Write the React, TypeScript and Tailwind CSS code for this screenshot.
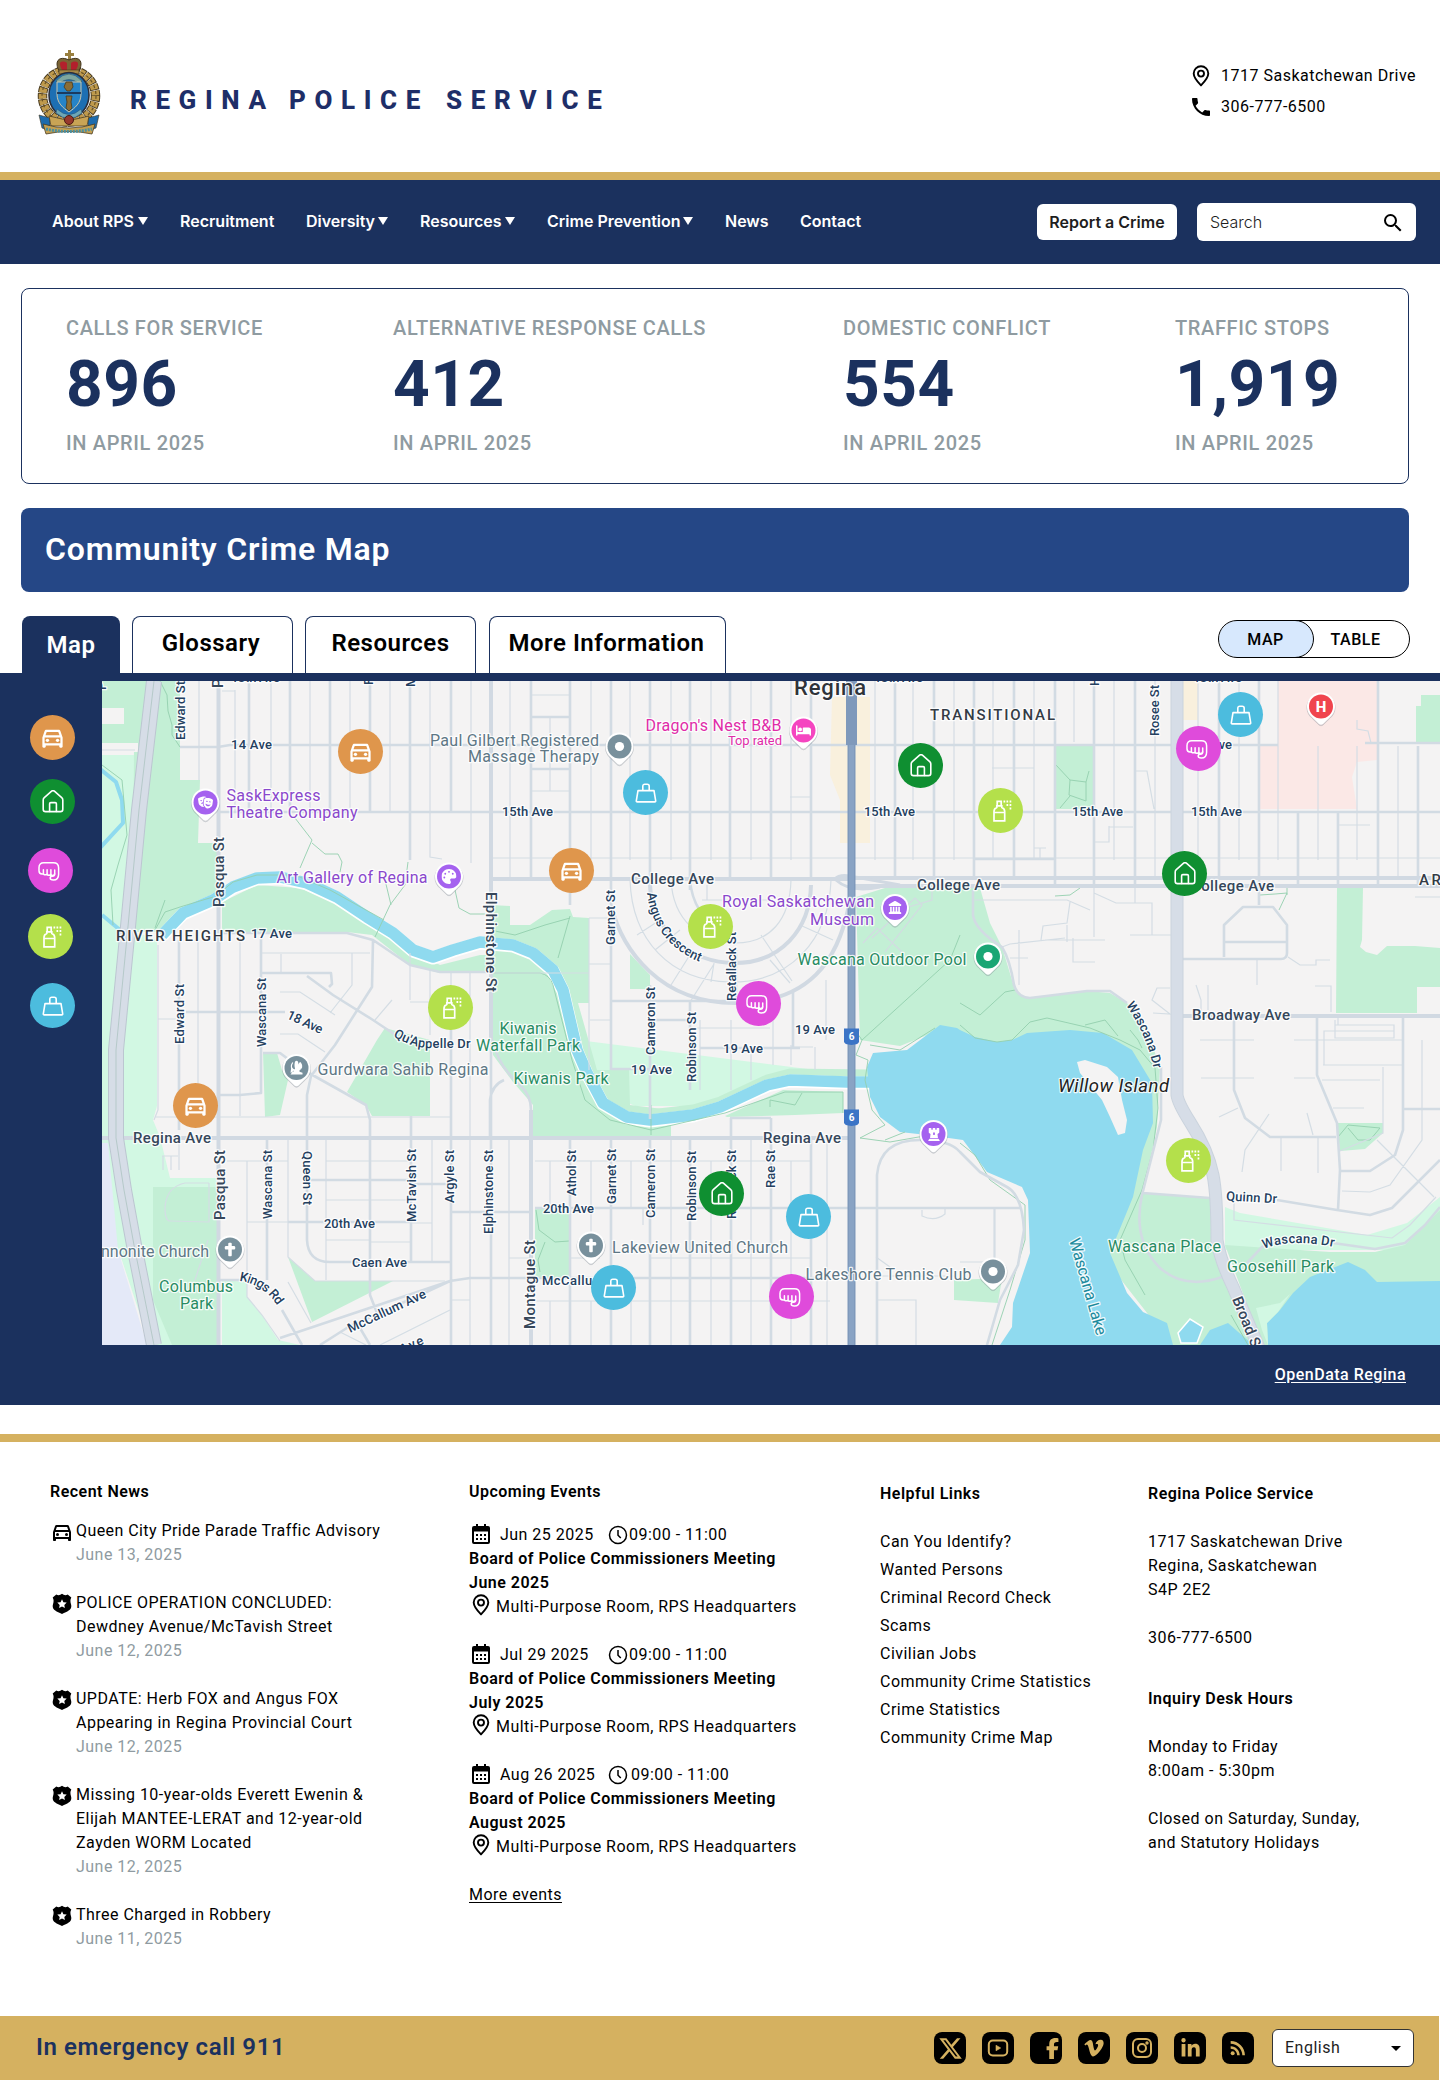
import React from "react";
import { MdOutlineDirectionsCar, MdPhone, MdSearch, MdRssFeed } from "react-icons/md";
import {
  FaXTwitter,
  FaFacebookF,
  FaVimeoV,
  FaLinkedinIn,
  FaMasksTheater,
  FaPalette,
  FaBed,
  FaChessRook,
  FaLandmark,
  FaCross,
} from "react-icons/fa6";

/* ---------- crime category icons ---------- */

type Kind = "car" | "house" | "fist" | "spray" | "bag";

function CategoryIcon({ kind }: { kind: Kind }) {
  if (kind === "car") return <MdOutlineDirectionsCar className="size-[27px]" />;
  const common = {
    width: 24,
    height: 24,
    viewBox: "0 0 24 24",
    fill: "none",
    stroke: "currentColor",
    strokeWidth: 1.6,
    strokeLinejoin: "round" as const,
    strokeLinecap: "round" as const,
  };
  if (kind === "house")
    return (
      <svg {...common}>
        <path d="M2.200 10c0-1 .3-1.700 1.100-2.400L10.600 1.200c.8-.7 2-.7 2.800 0l7.300 6.400c.8.7 1.100 1.400 1.100 2.400v9.200c0 1.500-.9 2.400-2.400 2.400H4.600c-1.500 0-2.400-.9-2.400-2.400z" />
        <path d="M8.600 21.400v-7.600c0-.8.4-1.200 1.200-1.200h4.400c.8 0 1.200.4 1.200 1.200v7.600" />
      </svg>
    );
  if (kind === "fist")
    return (
      <svg {...common} className="-ml-[3px]" strokeWidth="1.5">
        <path d="M6.400 15H5C3 15 2 13.900 2 11.800V8.500C2 5.400 3.700 3.800 6.800 3.800h9.600c3.300 0 5.200 1.800 5.200 5v6.400c0 3.700-1.900 5.800-5.200 5.800-1.900 0-3.200-.7-3.200-2 0-1.200.9-1.700 2.200-1.700 1.500 0 2.300-.8 2.300-2.300v-4" />
        <path d="M6.400 10.800v3.400c0 2.200 3.700 2.200 3.700 0v-3.400M10.100 14.400c0 2.400 3.800 2.400 3.800 0v-3.600M13.900 14.800c0 2.200 3.700 2.200 3.700 0" />
      </svg>
    );
  if (kind === "spray")
    return (
      <svg {...common} strokeLinejoin="miter" strokeLinecap="butt">
        <path
          d="M5 21.800V12.500c0-2.200 1-3.300 2.800-4V6.800h5v1.700c1.800.7 2.900 1.800 2.900 4v9.300zM5 13.500h10.700M8.200 6.400V2.400h4v4"
          strokeWidth="1.700"
        />
        <path d="M14.500 2.500h1.700M17.500 2.500h1.700M20.600 2.500h1.700M17.500 6h1.700M20.600 6h1.700M20.600 9.500h1.700" strokeWidth="1.800" />
      </svg>
    );
  return (
    <svg {...common}>
      <path d="M4 9.600h16l1.700 10.200c.1.700-.2 1.100-.9 1.100H3.200c-.7 0-1-.4-.9-1.100z" />
      <path d="M8.800 9.200V5.200c0-1.300.7-2 2-2h2.400c1.300 0 2 .7 2 2v4" />
    </svg>
  );
}

const kindBg: Record<Kind, string> = {
  car: "bg-[#df964c]",
  house: "bg-[#0f8f31]",
  fist: "bg-[#df4bdb]",
  spray: "bg-[#b4e04b]",
  bag: "bg-[#4cbcde]",
};

function Badge({ kind }: { kind: Kind }) {
  return (
    <div className={`flex size-[45px] items-center justify-center rounded-full text-white ${kindBg[kind]}`}>
      <CategoryIcon kind={kind} />
    </div>
  );
}

/* ---------- map ---------- */

const incidents: [Kind, number, number][] = [
  ["car", 360, 751],
  ["car", 571, 870],
  ["car", 195.5, 1105],
  ["house", 920.5, 765.5],
  ["house", 1184.5, 873.5],
  ["house", 721.5, 1193.5],
  ["fist", 758.5, 1003.5],
  ["fist", 1198.5, 748.5],
  ["fist", 791.5, 1296.5],
  ["spray", 450.5, 1007.5],
  ["spray", 710.5, 926.5],
  ["spray", 1000.5, 810.5],
  ["spray", 1188.5, 1160.5],
  ["bag", 645.5, 792.5],
  ["bag", 1240.5, 714.5],
  ["bag", 808.5, 1216.5],
  ["bag", 613.5, 1287.5],
];

const NAVY = "#24405f";
const SLATE = "#36475a";
const INK = "#333b45";
const PURPLE = "#8a48cc";
const GREY = "#5e7785";
const GREEN = "#278b62";

// text, x, baseline y, width, font size, colour, weight, rotation
type Label = [string, number, number, number, number, string, number, number];

const labels: Label[] = [
  ["14 Ave", 231, 749, 41, 13, NAVY, 500, 0],
  ["15th Ave", 502, 816, 51, 13, NAVY, 500, 0],
  ["15th Ave", 864, 816, 51, 13, NAVY, 500, 0],
  ["15th Ave", 1072, 816, 51, 13, NAVY, 500, 0],
  ["15th Ave", 1191, 816, 51, 13, NAVY, 500, 0],
  ["14th Ave", 1181, 749, 51, 13, NAVY, 500, 0],
  ["13th Ave", 231, 682, 49, 13, NAVY, 500, 0],
  ["13th Ave", 874, 681.5, 49, 13, NAVY, 500, 0],
  ["13th Ave", 1193, 682, 49, 13, NAVY, 500, 0],
  ["17 Ave", 251, 937.5, 41, 13, NAVY, 500, 0],
  ["18 Ave", 286, 1018, 38, 13, NAVY, 500, 25],
  ["Edward St", 184.5, 740, 59, 13, NAVY, 500, -90],
  ["Edward St", 183.5, 1044, 60, 13, NAVY, 500, -90],
  ["Wascana St", 266, 1047, 69, 13, NAVY, 500, -90],
  ["P", 106, 690, 8, 13, NAVY, 500, -90],
  ["P", 223, 688, 10, 15, SLATE, 500, -90],
  ["R", 373, 685, 8, 13, NAVY, 500, -90],
  ["M", 415, 687, 11, 13, NAVY, 500, -90],
  ["H", 1099, 686, 9, 13, NAVY, 500, -90],
  ["Pasqua St", 224, 907, 70, 15, SLATE, 500, -90],
  ["Pasqua St", 225, 1220, 70, 15, SLATE, 500, -90],
  ["Garnet St", 615, 945, 55, 13, NAVY, 500, -90],
  ["Elphinstone St", 486, 892, 100, 15, SLATE, 500, 90],
  ["Retallack St", 736, 1001, 69, 13, NAVY, 500, -90],
  ["Cameron St", 655, 1055, 68, 13, NAVY, 500, -90],
  ["Robinson St", 695.5, 1082, 70, 13, NAVY, 500, -90],
  ["19 Ave", 795, 1033.5, 40, 13, NAVY, 500, 0],
  ["19 Ave", 723, 1053, 40, 13, NAVY, 500, 0],
  ["19 Ave", 631, 1074, 41, 13, NAVY, 500, 0],
  ["Wascana St", 272, 1219, 69, 13, NAVY, 500, -90],
  ["Queen St", 303, 1151, 54, 13, NAVY, 500, 90],
  ["McTavish St", 416, 1222, 73, 13, NAVY, 500, -90],
  ["Argyle St", 454, 1203, 53, 13, NAVY, 500, -90],
  ["Elphinstone St", 493, 1234, 84, 13, NAVY, 500, -90],
  ["Athol St", 576, 1196, 46, 13, NAVY, 500, -90],
  ["Garnet St", 615.5, 1204, 55, 13, NAVY, 500, -90],
  ["Cameron St", 655, 1218, 69, 13, NAVY, 500, -90],
  ["Robinson St", 696, 1221, 70, 13, NAVY, 500, -90],
  ["Retallack St", 736, 1219, 69, 13, NAVY, 500, -90],
  ["Rae St", 775, 1188, 38, 13, NAVY, 500, -90],
  ["Montague St", 535, 1329, 89, 15, SLATE, 500, -90],
  ["20th Ave", 324, 1227.5, 51, 13, NAVY, 500, 0],
  ["20th Ave", 543, 1212.5, 51, 13, NAVY, 500, 0],
  ["Caen Ave", 352, 1267, 55, 13, NAVY, 500, 0],
  ["McCallum Ave", 350, 1333, 85, 13, NAVY, 500, -25],
  ["McCallum", 542, 1284.5, 62, 13, NAVY, 500, 0],
  ["Ave", 402, 1354, 25, 13, NAVY, 500, -25],
  ["Regina Ave", 133, 1142.5, 78, 15, SLATE, 500, 0],
  ["Regina Ave", 763, 1142.5, 78, 15, SLATE, 500, 0],
  ["College Ave", 631, 883.5, 83, 15, SLATE, 500, 0],
  ["College Ave", 917, 890, 83, 15, SLATE, 500, 0],
  ["College Ave", 1191, 890.5, 83, 15, SLATE, 500, 0],
  ["Broadway Ave", 1192, 1020, 98, 15, SLATE, 500, 0],
  ["Rosee St", 1159, 736, 51, 13, NAVY, 500, -90],
  ["TRANSITIONAL", 930, 720, 125, 15, INK, 500, 0],
  ["RIVER HEIGHTS", 116, 940.5, 129, 15, INK, 500, 0],
  ["AR", 1419, 884.5, 22, 15, INK, 500, 0],
  ["Regina", 794, 695, 72, 22, "#2f3339", 500, 0],
  ["Quinn Dr", 1226, 1200.5, 51, 13, NAVY, 500, 3],
  ["Broad St", 1232, 1299, 58, 15, SLATE, 500, 68],
  ["Wascana Lake", 1069, 1240, 100, 16, "#1c8a9c", 400, 74],
  ["SaskExpress", 226.5, 801, 94, 16, PURPLE, 400, 0],
  ["Theatre Company", 226.5, 818, 131, 16, PURPLE, 400, 0],
  ["Art Gallery of Regina", 276.5, 883, 151, 16, PURPLE, 400, 0],
  ["Paul Gilbert Registered", 430, 745.5, 169, 16, GREY, 400, 0],
  ["Massage Therapy", 468, 762, 131, 16, GREY, 400, 0],
  ["Dragon's Nest B&B", 645.5, 731, 136, 16, "#e02ca8", 400, 0],
  ["Top rated", 728, 745, 54, 13, "#e02ca8", 400, 0],
  ["Royal Saskatchewan", 722, 907, 152, 16, PURPLE, 400, 0],
  ["Museum", 810, 924.5, 64, 16, PURPLE, 400, 0],
  ["Wascana Outdoor Pool", 797.5, 965, 169, 16, GREEN, 400, 0],
  ["Kiwanis", 499.5, 1033.5, 57, 16, GREEN, 400, 0],
  ["Waterfall Park", 476, 1050.5, 104, 16, GREEN, 400, 0],
  ["Kiwanis Park", 513.5, 1083.5, 95, 16, GREEN, 400, 0],
  ["Gurdwara Sahib Regina", 317.5, 1075, 171, 16, GREY, 400, 0],
  ["nnonite Church", 101, 1257, 108, 16, GREY, 400, 0],
  ["Columbus", 159, 1292, 74, 16, GREEN, 400, 0],
  ["Park", 180, 1308.5, 33, 16, GREEN, 400, 0],
  ["Lakeview United Church", 612, 1253, 176, 16, GREY, 400, 0],
  ["Lakeshore Tennis Club", 805.5, 1280, 166, 16, GREY, 400, 0],
  ["Wascana Place", 1108, 1252, 113, 16, GREEN, 400, 0],
  ["Goosehill Park", 1227, 1272, 107, 16, GREEN, 400, 0],
];

const curvedLabels: [string, string, string, number][] = [
  ["angus", "Angus Crescent", "M647 893C651 925 669 951 705 964", 91],
  ["kings", "Kings Rd", "M239 1281Q264 1284 278 1307", 47],
  ["appelle", "Qu'Appelle Dr", "M393 1036Q412 1048 430 1048H474", 80],
  ["wasc1", "Wascana Dr", "M1126 1005Q1147 1035 1154 1070", 70],
  ["wasc2", "Wascana Dr", "M1264 1249Q1290 1238 1335 1247", 71],
];

const DARK_GREEN = "#c3efd5";
const LIGHT_GREEN = "#d2f8e3";
const WATER = "#8fdaef";
const LAND = "#f4f3f3";

const darkParks = [
  "102,681 180,681 180,780 200,780 198,843 217,843 217,897 183,907 165,932 133,932 134,743 102,743",
  "153,1187 217,1187 217,1345 172,1345 153,1300",
  "222,902 257,885 300,888 340,905 400,945 440,965 480,955 490,955 490,973 440,973 410,965 372,935 347,932 222,932",
  "490,905 510,906 510,925 530,925 552,910 570,909 573,917 589,918 589,1003 578,1003 597,1070 629,1070 630,1105 671,1110 671,1136 533,1136 533,1105 513,1082 493,1055",
  "725,1116 783,1090 843,1092 843,1113 795,1115 727,1117",
  "630,954 650,975 650,989 630,989",
  "263,1052 277,1053 282,1070 288,1080 280,1115 265,1117",
  "377,1040 385,1028 430,1040 430,1116 372,1116 366,1105 347,1092",
  "288,1257 315,1281 393,1281 312,1322",
  "535,1208 569,1208 569,1278 535,1278",
  "856,897 885,888 980,888 990,923 1002,947 1015,990 1025,998 1087,991 1110,993 1127,1003 1147,1030 1160,1067 1157,1127 1143,1193 1210,1198 1217,1247 1227,1277 1263,1345 1172,1345 1090,1240 1090,1100 1000,1060 940,1030 900,1046 860,1040",
  "1225,1245 1330,1252 1375,1252 1405,1245 1440,1210 1440,1345 1262,1345",
  "1337,1123 1383,1123 1383,1133 1365,1149 1340,1151",
  "1337,888 1363,888 1362,940 1360,947 1366,952 1377,955 1387,946 1415,946 1440,948 1440,987 1417,987 1417,1013 1336,1013",
  "1416,706 1421,706 1421,695 1440,695 1440,742 1416,742",
  "1055,746 1093,746 1093,809 1055,809",
  "954,1280 1002,1278 998,1303 954,1300",
];

const minorRoads =
  "M199 681V780M235 690V812M271 681V812M310 681V812M350 681V812M390 681V812M430 681V857L442 859M471 681V863" +
  "M510 681V879M550 718V791M591 681V860M630 681V860M671 681V860M711 681V860M751 681V860M791 681V860M831 681V697" +
  "M875 681V860M913 681V860M954 681V860M993 681V860M1034 681V860M1074 681V742M1114 681V860M1155 681V879M1198 681V860M1239 681V860M1278 681V860M1318 746V860M1357 746V860M1398 746V879" +
  "M493 858H1440M531 695H570M531 791H570M790 797H811M992 768H1034M222 691H235M1136 771H1147L1154 809M1109 827H1133M1109 826V842H1094" +
  "M158 945V1110L154 1120M198 930V1118M240 933V1116M158 1019H179M261 953H370M281 954V973M280 992H300L335 1015M352 953V985L330 1013M280 1034H298L325 1052" +
  "M155 1117H450M247 1161V1297L262 1315 280 1341M288 1138V1257L315 1281H445M326 1138V1280M227 1161H288M326 1161H411M326 1200H411M247 1222H288M411 1223H432M326 1240H370M370 1242H411M432 1138V1262M470 1138V1345M288 1282L311 1323" +
  "M509 1138V1258H530M550 1161V1208M591 1161V1240M631 1161V1208M671 1138V1345M711 1161V1345M751 1138V1345M791 1161V1345M827 1138V1345M535 1161H810M535 1301H830M650 1258H811M570 1258H600M509 1258V1345M550 1301V1345M591 1301V1345M631 1301V1345M643 1208V1225" +
  "M589 964H611M589 918H611M589 918V1070M490 973H589M590 1020H611M690 1028H770M700 1020V1090M731 1020V1090M751 1050V1080M773 1020V1065M791 1045V1065M813 1047H791M815 1047V1070M826 980V1040M650 1100V1119" +
  "M630 880C632 940 670 981 730 982S829 940 831 880M650 880M671 880C673 920 700 943 735 943S790 920 791 880M690 1002L714 964M671 985L693 950M711 982L714 963M637 935L660 920M655 950L680 930M770 960L790 983M761 935L792 981M800 925L833 940M702 900H770M707 885V900" +
  "M410 953V1000M430 970V1035M451 973V1028M410 1002H432M392 1000L375 1020M470 973V1138" +
  "M975 900H1067L1090 910M1094 888V937M1070 902L1067 923 1043 926 1041 940M1067 925V942M1045 940H1105M1073 938V962H1095M1094 893L1116 903H1152V935M1130 935H1172M1019 930V985M1010 958H1028M1135 888V903M1002 947L1010 944 1065 938" +
  "M1288 957L1300 965H1316V960H1330M1257 960V985M1196 985L1201 1000V1012M1208 985V1010M1315 986H1331V1012M1153 1013L1170 1014 1152 1000 1157 988H1170M1415 897H1440M1338 825H1370" +
  "M1200 1040H1254M1234 1018V1090M1294 1040H1402M1335 1020V1038H1394V1025H1335M1323 1065H1403M1322 1080H1380M1324 1065V1031H1394M1201 1078H1254M1294 1078H1315M1333 1108H1364M1219 1117L1238 1108M1269 1114L1245 1150 1242 1172M1281 1138V1171M1318 1138V1173M1307 1113L1313 1135M1383 1067V1133L1340 1151M1422 1040V1140L1390 1185 1370 1192 1342 1191M1377 1140L1434 1197M1234 1200V1220L1392 1238 1410 1225 1436 1197M1338 1018V1025" +
  "M1357 720V729L1368 731 1371 743H1377M877 1276H955M876 1300H916V1345M876 1257L890 1267M860 1030L846 1042M102 750H135M994 1260V1207M960 1262H995V1207M470 1300H450M366 1345L340 1332M380 1345L450 1310" +
  "M162 1156H178M163 1156V1170M171 1156V1170M179 1138V1170M1135 900V860M1034 848H1046M1040 848V860M1198 750V860" +
  "M209 1183H185Q166 1187 165 1208Q165 1221 170 1221L209 1222V1183M208 1240L195 1280M922 1210V1216Q935 1222 945 1214V1208";

const midRoads =
  "M249 681V812M290 681V812M330 681V812M370 681V812M410 681V860M451 681V812M531 681V879M570 681V905M611 681V1070M650 681V890M690 681V890M730 681V879M771 681V879M811 681V879M895 681V879M934 681V879M974 681V879M1014 681V879M1055 681V888M1094 681V888M1135 681V888M1219 681V879M1259 681V905M1298 812V884M1338 812V884M1378 681V884M1418 746V884" +
  "M180 747H218L230 745H1278M1365 743H1440M220 812H1440M531 717H570M531 769H570M974 859H1054" +
  "M179 940V1130M261 937V1093L240 1095H220M222 933H347L373 940L410 965L440 972H490M186 1012H285M261 973H331L332 984 329 987M307 976L333 995L373 1020L400 1038L451 1048M373 940L372 987L335 1045L311 1076L307 1095V1240Q308 1262 330 1262H450M263 1053H280L300 1068L366 1105L370 1120V1295L377 1313M310 1180H411M288 1222H410M411 1116V1262M267 1138V1280M410 1184H450M218 1280H240M282 1310L302 1345M320 1345L350 1326L420 1295L450 1281L470 1278H827M451 1212H530M451 1028V1345M280 1338L450 1281M360 1328L370 1345" +
  "M491 900V1345M570 1138V1345M611 1138V1345M650 1138V1345M690 1138V1345M731 1138V1345M771 1138V1345M811 1138V1345M535 1208H1020M611 1001H740M611 1069H670M650 1020H690M700 1048H800M690 880C692 905 705 920 715 925M650 985V1119M690 1002V1090M736 950V1001M730 1118H771M731 1118V1138M771 1118V1138M793 990V1048" +
  "M1224 957V925L1243 907H1273L1287 925V953Q1287 959 1281 959H1183M1224 942H1287M1234 1018V1090L1245 1118L1270 1137H1336M1317 1018V1075L1337 1123L1340 1170L1338 1210M1403 1016V1130L1395 1155L1370 1171H1341M1403 1109H1440M1277 1200L1337 1210L1370 1215L1392 1208L1440 1160M1333 1243L1375 1249L1405 1243L1425 1225L1440 1207M1247 1263L1262 1247L1280 1240" +
  "M973 890V915Q975 930 1002 947Q1010 960 1014 985Q1018 998 1030 998L1087 991H1110L1127 1003M877 1345V1175Q880 1140 920 1140Q950 1140 960 1152L980 1172L1007 1187Q1022 1195 1024 1230L1018 1265L1000 1300L987 1345M1161 1067V1120L1142 1195Q1132 1240 1160 1268Q1185 1290 1222 1277M1143 1193L1210 1198M493 1040Q497 1065 520 1085Q531 1095 531 1110V1345M490 1140V1100Q492 1085 504 1080";

const majorRoads =
  "M218.500 681V1345M491 681V1040M531 1110V1345M492 879H855M855 878H1440M855 886H1440M102 1138H848M1183 1016H1440M611 905C622 950 660 1003 735 1003S838 960 849 905M650 885C652 930 690 963 735 963S810 930 811 885";

const footpaths =
  "M160 681L167 695L168 711L172 725V735L180 747M102 765L122 780L127 835L118 865L111 890L113 925M165 900L155 928M213 897L180 907L165 912L155 930M217 895L233 882L257 875H295L330 890L384 920M295 818L312 840L300 868M312 843L325 854H338L342 862L340 872M408 862L405 885L390 905L375 937M385 880L391 905M455 890L459 908L470 914H490" +
  "M490 930L515 935L545 925L570 918M490 973H540Q550 975 553 985L572 1060L585 1100L610 1120L651 1130L725 1113L785 1092H843V1113M570 916L558 958M651 1105V1135M770 1107V1100L795 1105L802 1093M855 1030L862 1040L856 1055L868 1060L865 1080L872 1110L885 1125L860 1138L890 1142L930 1135M862 1040L950 960L960 935M870 1045L900 1050L935 1028" +
  "M960 1003L980 1015L1005 992L1015 990M960 1025L975 1038L997 1042L1012 1040L1030 1022L1047 1018L1090 1028L1120 1040L1140 1050M1085 1025L1105 1020L1118 1036M1142 1048L1138 1040L1130 1030M1140 1050L1155 1068L1158 1108L1153 1150L1142 1190L1120 1240L1125 1260L1145 1295M1056 765L1070 780L1086 782L1089 771M1070 780L1069 795L1086 801V782M1060 808L1070 796M1260 895L1275 894L1287 893L1279 910M1287 888V895M1055 896L1070 895L1080 888M960 1143L975 1155L990 1180L1025 1205V1240L1010 1290L992 1345M1338 1137L1348 1125L1380 1128L1370 1140H1358L1348 1128M536 1210L539 1230L555 1242L569 1241M545 1242L538 1260L540 1272M1231 1315L1248 1345M885 1140L905 1132";

const RIVER =
  "M162 935L183 913L213 900L233 887L257 878L280 877L307 883L337 897L367 917L393 933L413 950L433 957L453 950L480 942L513 945L533 953L553 970L563 990L570 1020L577 1050L587 1073L603 1103L627 1117L650 1120L693 1115L720 1107L767 1085L790 1080L847 1082L875 1082";
const RAIL = "M154 681L139 810L127 937L116 1050V1138L124 1190L134 1245L154 1345";
const BROAD = "M1177 681V1095Q1178 1103 1190 1122Q1208 1150 1213 1175Q1217 1195 1217 1240Q1220 1260 1233 1287L1260 1350";

function PoiPin({ x, y, fill, children }: { x: number; y: number; fill: string; children?: React.ReactNode }) {
  return (
    <g transform={`translate(${x} ${y})`}>
      <path
        d="M-2 17.500L-9 10.700A14 14 0 1 1 9 10.700L2 17.500Q0 19 -2 17.500Z"
        fill="#7d8791"
        stroke="#7d8791"
        opacity="0.35"
        transform="translate(0 1)"
      />
      <path d="M-2 17.500L-9 10.700A14 14 0 1 1 9 10.700L2 17.500Q0 19 -2 17.500Z" fill="#fff" />
      <circle r="12" fill={fill} />
      {children ?? <circle r="4.600" fill="#fff" />}
    </g>
  );
}

const glyph = { x: -7.5, y: -7.5, size: 15, color: "#fff" };

function CityMap() {
  return (
    <svg className="block h-full w-full font-[Roboto]" viewBox="102 681 1338 664">
      <rect x="102" y="681" width="1338" height="664" fill={LAND} />
      <g fill={LIGHT_GREEN}>
        <polygon points="102,755 138,755 135,932 157,940 157,1106 153,1120 160,1137 170,1178 217,1178 217,1345 150,1345 102,1200" />
        <polygon points="222,1280 247,1282 247,1297 262,1315 278,1340 300,1345 222,1345" />
        <polygon points="1225,1207 1240,1213 1367,1235 1407,1223 1440,1197 1440,1250 1225,1250" />
        <path d="M578 1040L600 1090L635 1106H700L760 1078L800 1070H855V1075" />
      </g>
      <g fill={DARK_GREEN}>
        {darkParks.map((p) => (
          <polygon key={p} points={p} />
        ))}
      </g>
      <rect x="102" y="708" width="22" height="16" fill={LAND} />
      <rect x="102" y="743" width="36" height="9" fill={LAND} />
      <polygon points="102,1143 108,1143 118,1250 147,1345 102,1345" fill="#e4e9f8" />
      <polygon points="1278,681 1377,681 1377,760 1357,762 1352,777 1357,809 1259,809 1259,746 1278,746" fill="#fbe8e6" />
      <polygon points="832,697 870,697 870,843 840,843 840,800 830,775" fill="#f9f0dd" />
      <rect x="1183" y="681" width="15" height="39" fill="#f9f0dd" />

      {/* creek and lake */}
      <polyline
        points="597,1075 607,1096 627,1110 650,1113 693,1108 720,1100 767,1078 790,1072 870,1073"
        fill="none"
        stroke={DARK_GREEN}
        strokeWidth="7"
      />
      <g fill="none" strokeLinejoin="round">
        <path d={RIVER} stroke="#fff" strokeWidth="13" transform="translate(0 1)" />
        <path d={RIVER} stroke={WATER} strokeWidth="11.500" />
        <path d="M100 769L116 782L122 800L123 823L100 848" stroke={WATER} strokeWidth="4" />
        <path d="M102 915L120 930" stroke={WATER} strokeWidth="4" />
      </g>
      <polygon
        fill={WATER}
        points="960,1030 975,1037 997,1042 1012,1040 1027,1033 1070,1030 1103,1033 1132,1050 1152,1083 1153,1123 1143,1150 1133,1197 1110,1253 1127,1293 1143,1312 1167,1323 1173,1345 1000,1345 1012,1327 1013,1303 1030,1253 1028,1200 1022,1187 987,1172 963,1140 927,1135 900,1132 880,1117 870,1097 867,1067 873,1053 907,1050 940,1025 957,1028"
      />
      <polygon fill={LAND} points="1077,1062 1085,1060 1107,1067 1118,1077 1122,1100 1127,1120 1125,1133 1118,1135 1110,1117 1102,1100 1080,1073" />
      <polygon fill={WATER} points="1440,1281 1377,1282 1365,1270 1348,1262 1310,1277 1293,1293 1280,1310 1267,1323 1268,1345 1440,1345" />
      <polygon fill={LIGHT_GREEN} points="1256,1308 1280,1303 1290,1294 1278,1312 1267,1323 1268,1345 1262,1330" />
      <polygon fill={WATER} points="1200,1345 1210,1330 1228,1323 1253,1345" />
      <polygon fill={WATER} stroke="#fff" strokeWidth="1.500" points="1178,1333 1190,1319 1203,1327 1197,1343 1181,1343" />

      <path d={footpaths} fill="none" stroke="#93cfae" strokeWidth="0.900" />
      <path d={minorRoads} fill="none" stroke="#d4dde4" strokeWidth="1.200" />
      <path d={midRoads} fill="none" stroke="#d2dbe3" strokeWidth="2.600" strokeLinejoin="round" />
      <path d={majorRoads} fill="none" stroke="#d1d9e2" strokeWidth="4" />
      <path d="M835 879Q840 873 855 877L900 885M836 880Q850 893 880 887" fill="none" stroke="#d1d9e2" strokeWidth="3" />
      <path
        d="M863 943L877 928L902 952M872 938L915 898L922 905L885 952M905 908L932 900V888"
        fill="none"
        stroke="#d3dbe2"
        strokeWidth="1.200"
      />

      {/* railway */}
      <g fill="none">
        <path d={RAIL} stroke="#bcc6d1" strokeWidth="16" />
        <path d={RAIL} stroke="#d6dde7" strokeWidth="14" />
        <path d={RAIL} stroke="#b5c9c9" strokeWidth="1" />
      </g>

      {/* Broad Street */}
      <path d={BROAD} fill="none" stroke="#cad3dd" strokeWidth="13" />
      <path d={BROAD} fill="none" stroke="#d6dde7" strokeWidth="11" />

      {/* Highway 6 */}
      <path d="M851.500 681V1345" stroke="#7f99bb" strokeWidth="8" />
      <path d="M851.500 681V745" stroke="#7f99bb" strokeWidth="11" />
      <path d="M851.500 745V1345" stroke="#89a3c4" strokeWidth="5" />
      {[1036.5, 1117.5].map((y) => (
        <g key={y}>
          <path d={`M844 ${y - 8}H859V${y + 5}Q859 ${y + 8} 851.500 ${y + 8.5}Q844 ${y + 8} 844 ${y + 5}Z`} fill="#3b74c6" />
          <text x="851.500" y={y + 3.8} textAnchor="middle" fontSize="10" fontWeight="700" fill="#fff">
            6
          </text>
        </g>
      ))}

      <g stroke="#fff" strokeWidth="2.600" strokeLinejoin="round" strokeOpacity="0.85" style={{ paintOrder: "stroke" }}>
        {labels.map(([t, x, y, w, size, fill, weight, rot], i) => (
          <text
            key={i}
            transform={`translate(${x} ${y}) rotate(${rot})`}
            textLength={w}
            fontSize={size}
            fontWeight={weight}
            fill={fill}
          >
            {t}
          </text>
        ))}
        <text x="1058" y="1092" textLength="111" fontSize="18.500" fontStyle="italic" fill="#222">
          Willow Island
        </text>
        {curvedLabels.map(([id, t, d, w]) => (
          <React.Fragment key={id}>
            <path id={id} d={d} fill="none" stroke="none" />
            <text fontSize="13" fontWeight="500" fill={NAVY} textLength={w}>
              <textPath href={`#${id}`}>{t}</textPath>
            </text>
          </React.Fragment>
        ))}
      </g>

      <PoiPin x={205.5} y={802.5} fill="#a562ef">
        <FaMasksTheater {...glyph} />
      </PoiPin>
      <PoiPin x={449} y={876.5} fill="#a562ef">
        <FaPalette {...glyph} />
      </PoiPin>
      <PoiPin x={619.5} y={746.5} fill="#78909c" />
      <PoiPin x={803.5} y={730.5} fill="#f545c0">
        <FaBed {...glyph} />
      </PoiPin>
      <PoiPin x={895} y={908} fill="#a562ef">
        <FaLandmark x={-6.5} y={-7} size={13} color="#fff" />
      </PoiPin>
      <PoiPin x={988} y={956.5} fill="#1aa674" />
      <PoiPin x={296.5} y={1068} fill="#78909c">
        <path d="M-6 6.500h12v-1.700l-3-1V1.500q2-1 2-4 0-2-1.500-3.500M-5-2.500q0 3 2 4v2.300l-3 1z" fill="#fff" />
        <path d="M-3.800-5.500q-3.500 5.500 1.800 7.500M3.800-5.500q3.500 5.500-1.800 7.500" fill="none" stroke="#fff" strokeWidth="1.200" />
        <ellipse cy="-3" rx="2" ry="4.300" fill="#fff" />
        <path d="M-1.500 0h3v5h-3z" fill="#fff" />
      </PoiPin>
      <PoiPin x={230} y={1249.5} fill="#78909c">
        <FaCross x={-7} y={-7} size={14} color="#fff" />
      </PoiPin>
      <PoiPin x={591} y={1245.5} fill="#78909c">
        <FaCross x={-7} y={-7} size={14} color="#fff" />
      </PoiPin>
      <PoiPin x={993} y={1271.5} fill="#78909c" />
      <PoiPin x={933.5} y={1134} fill="#a562ef">
        <FaChessRook x={-6.5} y={-7} size={14} color="#fff" />
      </PoiPin>
      <PoiPin x={1321} y={706.5} fill="#f0444e">
        <text textAnchor="middle" y="5.500" fontSize="15" fontWeight="800" fill="#fff">
          H
        </text>
      </PoiPin>
    </svg>
  );
}

/* ---------- header ---------- */

function Crest() {
  return (
    <svg width="64" height="85" viewBox="0 0 64 85">
      {/* laurel wreath */}
      <ellipse cx="32" cy="46" rx="26.500" ry="26" fill="none" stroke="#4b3d22" strokeWidth="9.500" strokeDasharray="5.500 .6" />
      <ellipse cx="32" cy="46" rx="26.500" ry="26" fill="none" stroke="#bf9a4c" strokeWidth="7.500" strokeDasharray="4.600 1.500" />
      <ellipse cx="32" cy="46" rx="27" ry="26.500" fill="none" stroke="#6b5427" strokeWidth="1.200" strokeDasharray="3 3" />
      {/* crown */}
      <path d="M31 0h3v3h3v3h-3v4h-3V6h-3V3h3z" fill="#9a803f" />
      <path d="M20 14c0-6 6-7 12-4 6-3 12-2 12 4 0 4-2 6-3 9H23c-1-3-3-5-3-9z" fill="#7a6334" stroke="#42351d" />
      <path d="M23 14c0-3 4-3 7-1v7h-5c-1-2-2-4-2-6zM41 14c0-3-4-3-7-1v7h5c1-2 2-4 2-6z" fill="#b3202c" />
      <path d="M22 20h20v4H22z" fill="#a58745" stroke="#42351d" strokeWidth=".6" />
      {/* shield */}
      <ellipse cx="32" cy="45" rx="20" ry="22.500" fill="#1d6fb3" stroke="#2c2f3a" strokeWidth="1.600" />
      <path d="M19 31q13-14 26 0l-3 2.500q-10-8-20 0z" fill="#7ea79f" stroke="#3c5b63" strokeWidth=".6" />
      <path d="M20 32h24v12c0 9-6 14-12 18-6-4-12-9-12-18z" fill="#2684c8" stroke="#cfc6a8" strokeWidth="1" />
      <path d="M20 43h24" stroke="#182947" strokeWidth="1.600" />
      <path d="M29 32h6l1 5-3 4h-3l-3-4zM29 46h6l-1 6 1 6-3 3-3-3 1-6z" fill="#8a6d35" stroke="#49391c" strokeWidth=".8" />
      <path d="M20 59q12 11 24 0l1 4q-13 11-26 0z" fill="#6fa7b5" stroke="#2a5b7b" strokeWidth=".6" />
      {/* ribbon */}
      <path d="M2 65l11 3v13l-8-3zM62 65l-11 3v13l8-3z" fill="#1d6cae" stroke="#42351d" strokeWidth=".6" />
      <path d="M12 66l13 3 7 1 7-1 13-3-2 10H14z" fill="#c9a455" stroke="#4b3d22" strokeWidth=".8" />
      <path d="M6 74q26 8 52 0l-3 10q-23-5-46 0z" fill="#c3a052" stroke="#4b3d22" strokeWidth=".8" />
      <path d="M9 79q23 5 46 0" fill="none" stroke="#4a8fa0" strokeWidth="3" strokeDasharray="2 1" />
      <circle cx="32" cy="70" r="4.500" fill="#97382c" stroke="#4b1a15" />
    </svg>
  );
}

function PinIcon({ className }: { className?: string }) {
  return (
    <svg className={className} width="18" height="22" viewBox="0 0 18 22" fill="none" stroke="currentColor" strokeWidth="1.900">
      <path d="M9 20.400C5.400 16.800 1.700 12.600 1.700 8.600a7.300 7.300 0 0 1 14.600 0c0 4-3.700 8.200-7.300 11.800z" strokeLinejoin="round" />
      <circle cx="9" cy="8.600" r="3" />
    </svg>
  );
}

function Caret() {
  return (
    <svg width="10" height="8" viewBox="0 0 10 8" className="shrink-0">
      <path d="M0 0h10L5 8z" fill="#fff" />
    </svg>
  );
}

function NavItem({ label, caret, className }: { label: string; caret?: boolean; className: string }) {
  return (
    <a className={`flex shrink-0 items-center ${className}`}>
      <span>{label}</span>
      {caret && <Caret />}
    </a>
  );
}

function Stat({ label, value, className }: { label: string; value: string; className: string }) {
  return (
    <div className={`shrink-0 whitespace-nowrap ${className}`}>
      <div className="text-xl leading-6 font-medium tracking-[0.640px] text-[#8f9ba1]">{label}</div>
      <div className="mt-[7px] text-[64px] leading-[75px] font-bold tracking-[0.500px] text-[#1b315e]">{value}</div>
      <div className="mt-[9px] text-xl leading-6 font-medium tracking-[0.640px] text-[#8f9ba1]">IN APRIL 2025</div>
    </div>
  );
}

/* ---------- footer ---------- */

const news: { car?: boolean; lines: string[]; date: string }[] = [
  { car: true, lines: ["Queen City Pride Parade Traffic Advisory"], date: "June 13, 2025" },
  { lines: ["POLICE OPERATION CONCLUDED:", "Dewdney Avenue/McTavish Street"], date: "June 12, 2025" },
  { lines: ["UPDATE: Herb FOX and Angus FOX", "Appearing in Regina Provincial Court"], date: "June 12, 2025" },
  {
    lines: ["Missing 10-year-olds Everett Ewenin &", "Elijah MANTEE-LERAT and 12-year-old", "Zayden WORM Located"],
    date: "June 12, 2025",
  },
  { lines: ["Three Charged in Robbery"], date: "June 11, 2025" },
];

const events = [
  ["Jun 25 2025", "June 2025"],
  ["Jul 29 2025", "July 2025"],
  ["Aug 26 2025", "August 2025"],
];

const links = [
  "Can You Identify?",
  "Wanted Persons",
  "Criminal Record Check",
  "Scams",
  "Civilian Jobs",
  "Community Crime Statistics",
  "Crime Statistics",
  "Community Crime Map",
];

function PoliceBadgeIcon() {
  return (
    <svg width="20" height="22" viewBox="0 0 20 22" className="mt-0.5 ml-0.5">
      <path
        d="M4.300 1.600C6.300 2.600 8.300 2.200 10 .8c1.700 1.400 3.700 1.800 5.700.8l3.600 3c-1.300 2.200-1 4.200-.3 6.700 1.500 5.300-2.700 6.700-9 9.700-6.300-3-10.500-4.400-9-9.700.7-2.500 1-4.500-.3-6.700z"
        fill="#000"
      />
      <path d="M10 6.200l1.400 3 3.300.4-2.400 2.300.6 3.200-2.900-1.600-2.900 1.600.6-3.200-2.400-2.300 3.300-.4z" fill="#fff" />
    </svg>
  );
}

function CalendarIcon() {
  return (
    <svg width="20" height="22" viewBox="0 0 20 22" className="shrink-0">
      <path d="M5 0h2v2h6V0h2v2h2q2 0 2 2v14q0 2-2 2H3q-2 0-2-2V4q0-2 2-2h2z" fill="#000" />
      <path d="M3 7.500h14V18H3z" fill="#fff" />
      <path d="M5 10h2v2H5zM9 10h2v2H9zM13 10h2v2h-2zM5 14h2v2H5zM9 14h2v2H9zM13 14h2v2h-2z" fill="#000" />
    </svg>
  );
}

function ClockIcon() {
  return (
    <svg width="20" height="20" viewBox="0 0 20 20" fill="none" stroke="#000" strokeWidth="1.500" className="shrink-0">
      <circle cx="10" cy="10" r="8.500" />
      <path d="M10 5v5.200l2.800 2.800" />
    </svg>
  );
}

function SocialTile({ children, className = "items-center justify-center" }: { children: React.ReactNode; className?: string }) {
  return <a className={`flex size-8 overflow-hidden rounded-lg bg-black text-[#d5b160] ${className}`}>{children}</a>;
}

export default function App() {
  return (
    <div className="h-[2080px] w-[1440px] overflow-hidden bg-white font-[Roboto,sans-serif] text-black">
      <header>
        <div className="flex h-[172px] justify-between">
          <div className="flex pt-[50px] pl-[37px]">
            <Crest />
            <div className="mt-[35px] ml-[29px] flex gap-[21px] text-[26px] leading-[31px] font-extrabold text-[#1e2e68]">
              <span className="w-[138px] tracking-[8.600px]">REGINA</span>
              <span className="w-[136px] tracking-[8.600px]">POLICE</span>
              <span className="tracking-[8.700px]">SERVICE</span>
            </div>
          </div>
          <div className="w-[249px] pt-[60px] tracking-[0.500px]">
            <div className="flex h-[31px] items-center">
              <PinIcon className="ml-px" />
              <span className="ml-[11px]">1717 Saskatchewan Drive</span>
            </div>
            <div className="flex h-[31px] items-center">
              <MdPhone className="-ml-0.5 size-6" />
              <span className="ml-2">306-777-6500</span>
            </div>
          </div>
        </div>
        <div className="h-2 bg-[#d5b160]" />
        <nav className="flex h-[84px] items-center bg-[#1b315e] font-[Inter,sans-serif] text-white">
          <div className="-mt-0.5 flex pl-[52px] text-base font-semibold whitespace-nowrap">
            <NavItem className="w-[128px] gap-1" label="About RPS" caret />
            <NavItem className="w-[126px]" label="Recruitment" />
            <NavItem className="w-[114px] gap-[3px]" label="Diversity" caret />
            <NavItem className="w-[127px] gap-[3px]" label="Resources" caret />
            <NavItem className="w-[178px] gap-0.5" label="Crime Prevention" caret />
            <NavItem className="w-[75px]" label="News" />
            <NavItem className="w-[237px]" label="Contact" />
          </div>
          <button className="h-9 w-[140px] shrink-0 rounded-md bg-white text-base font-semibold whitespace-nowrap text-[#1e1e1e]">
            Report a Crime
          </button>
          <div className="ml-5 flex h-[38px] w-[219px] shrink-0 items-center justify-between rounded-md bg-white pr-[11px] pl-[13px] text-base font-light text-[#1e1e1e]">
            Search
            <MdSearch className="mt-px size-6 text-black" />
          </div>
        </nav>
      </header>

      <main>
        <section className="mx-[21px] mt-6 flex h-[196px] w-[1388px] rounded-lg border border-[#1b315e] pt-[27px] pl-[44px]">
          <Stat className="w-[327px]" label="CALLS FOR SERVICE" value="896" />
          <Stat className="w-[450px]" label="ALTERNATIVE RESPONSE CALLS" value="412" />
          <Stat className="w-[332px]" label="DOMESTIC CONFLICT" value="554" />
          <Stat className="" label="TRAFFIC STOPS" value="1,919" />
        </section>

        <h1 className="mx-[21px] mt-6 flex h-[84px] w-[1388px] items-center rounded-lg bg-[#254786] pb-0.5 pl-6 text-[32px] font-semibold tracking-[0.800px] text-white">
          Community Crime Map
        </h1>

        <div className="mt-6 flex h-[57px] pr-[30px] pl-[22px] text-2xl font-semibold tracking-[0.500px] whitespace-nowrap">
          <div className="flex w-[98px] items-center justify-center rounded-t-lg bg-[#1b315e] text-white">Map</div>
          <div className="ml-3 flex w-[161px] justify-center rounded-t-lg border border-b-0 border-[#1b315e] pt-[10px] pr-[3px]">Glossary</div>
          <div className="ml-3 flex w-[171px] justify-center rounded-t-lg border border-b-0 border-[#1b315e] pt-[10px]">Resources</div>
          <div className="ml-[13px] flex w-[237px] justify-center rounded-t-lg border border-b-0 border-[#1b315e] pt-[10px] pr-0.5">
            More Information
          </div>
          <div className="mt-1 ml-auto flex h-[38px] w-[192px] overflow-hidden rounded-full border border-black text-base font-medium">
            <div className="-m-px flex w-[96px] items-center justify-center rounded-full border border-black bg-[#d7e8fd] pt-0.5 pr-px">MAP</div>
            <div className="flex flex-1 items-center justify-center pt-0.5 pr-[11px]">TABLE</div>
          </div>
        </div>

        <section className="h-[732px] bg-[#1b315e] pt-2">
          <div className="flex h-[664px]">
            <aside className="flex w-[102px] shrink-0 flex-col pt-[34px] pl-[30px]">
              <Badge kind="car" />
              <div className="mt-[19px]">
                <Badge kind="house" />
              </div>
              <div className="mt-6 -ml-0.5">
                <Badge kind="fist" />
              </div>
              <div className="mt-[21px] -ml-0.5">
                <Badge kind="spray" />
              </div>
              <div className="mt-6">
                <Badge kind="bag" />
              </div>
            </aside>
            <div className="relative w-[1338px] overflow-hidden">
              <CityMap />
              {incidents.map(([kind, x, y]) => (
                <div key={`${x}-${y}`} className="absolute" style={{ left: x - 124.5, top: y - 703.5 }}>
                  <Badge kind={kind} />
                </div>
              ))}
            </div>
          </div>
          <div className="flex h-[60px] items-center justify-end pr-[34px]">
            <a className="text-base font-medium tracking-[0.500px] text-white underline underline-offset-2">OpenData Regina</a>
          </div>
        </section>
      </main>

      <footer>
        <div className="mt-[29px] h-2 bg-[#d5b160]" />
        <div className="flex h-[574px] pt-[38px] pl-[50px] text-base leading-6 tracking-[0.480px] whitespace-nowrap">
          <section className="w-[419px]">
            <h2 className="font-semibold">Recent News</h2>
            <div className="mt-[15px] flex flex-col gap-6">
              {news.map((n) => (
                <div key={n.lines[0]} className="flex">
                  <div className="w-[26px] shrink-0">
                    {n.car ? <MdOutlineDirectionsCar className="mt-px size-6" /> : <PoliceBadgeIcon />}
                  </div>
                  <div>
                    {n.lines.map((l) => (
                      <div key={l} className={n.car ? "tracking-[0.430px]" : ""}>
                        {l}
                      </div>
                    ))}
                    <div className="text-[#8f9ba1]">{n.date}</div>
                  </div>
                </div>
              ))}
            </div>
          </section>

          <section className="w-[411px]">
            <h2 className="font-semibold">Upcoming Events</h2>
            <div className="mt-[19px] flex flex-col gap-6">
              {events.map(([date, month]) => (
                <div key={date}>
                  <div className="flex h-6 items-center">
                    <div className="w-[31px] pl-0.5">
                      <CalendarIcon />
                    </div>
                    <span className="w-[108px]">{date}</span>
                    <ClockIcon />
                    <span className={date.startsWith("Aug") ? "ml-[3px]" : "ml-px"}>09:00 - 11:00</span>
                  </div>
                  <div className="font-semibold">Board of Police Commissioners Meeting</div>
                  <div className="font-semibold">{month}</div>
                  <div className="flex items-center">
                    <PinIcon className="-mt-1 mr-1.5 ml-[3px]" />
                    Multi-Purpose Room, RPS Headquarters
                  </div>
                </div>
              ))}
            </div>
            <a className="mt-6 block underline underline-offset-2">More events</a>
          </section>

          <section className="w-[268px] pt-0.5">
            <h2 className="mb-[22px] font-semibold">Helpful Links</h2>
            {links.map((l) => (
              <a key={l} className="block h-7 leading-7">
                {l}
              </a>
            ))}
          </section>

          <section className="pt-0.5">
            <h2 className="font-semibold">Regina Police Service</h2>
            <p className="mt-6">
              1717 Saskatchewan Drive
              <br />
              Regina, Saskatchewan
              <br />
              S4P 2E2
            </p>
            <p className="mt-6">306-777-6500</p>
            <h2 className="mt-[37px] font-semibold">Inquiry Desk Hours</h2>
            <p className="mt-6">
              Monday to Friday
              <br />
              8:00am - 5:30pm
            </p>
            <p className="mt-6">
              Closed on Saturday, Sunday,
              <br />
              and Statutory Holidays
            </p>
          </section>
        </div>

        <div className="flex h-16 w-[1439px] items-center justify-between bg-[#d5b160] pr-[25px] pl-9">
          <div className="pb-0.5 text-2xl font-semibold tracking-[0.600px] text-[#1b315e]">In emergency call 911</div>
          <div className="flex items-center gap-4">
            <SocialTile>
              <FaXTwitter className="size-[25px]" />
            </SocialTile>
            <SocialTile>
              <svg width="24" height="24" viewBox="0 0 24 24" fill="none" stroke="currentColor" strokeWidth="2">
                <rect x="2.800" y="4.500" width="18.400" height="15" rx="4" />
                <path d="M10 9.200v5.600l4.700-2.800z" fill="currentColor" strokeWidth=".6" />
              </svg>
            </SocialTile>
            <SocialTile className="items-end justify-end pr-[3px] pb-[5px]">
              <FaFacebookF className="h-[21px] w-[13px]" />
            </SocialTile>
            <SocialTile>
              <FaVimeoV className="size-[22px]" />
            </SocialTile>
            <SocialTile>
              <svg width="24" height="24" viewBox="0 0 24 24" fill="none" stroke="currentColor" strokeWidth="2">
                <rect x="3" y="3" width="18" height="18" rx="5" />
                <circle cx="12" cy="12" r="4" />
                <circle cx="17" cy="7" r=".7" fill="currentColor" />
              </svg>
            </SocialTile>
            <SocialTile>
              <FaLinkedinIn className="size-[21px]" />
            </SocialTile>
            <SocialTile>
              <MdRssFeed className="size-[22px]" />
            </SocialTile>
            <div className="ml-0.5 flex h-[38px] w-[142px] items-center justify-between rounded-md border border-[#333] bg-white pr-3 pl-3 text-base tracking-[0.500px] text-[#1e1e1e]">
              English
              <svg width="10" height="5" viewBox="0 0 10 5">
                <path d="M0 0h10L5 5z" fill="#000" />
              </svg>
            </div>
          </div>
        </div>
      </footer>
    </div>
  );
}
